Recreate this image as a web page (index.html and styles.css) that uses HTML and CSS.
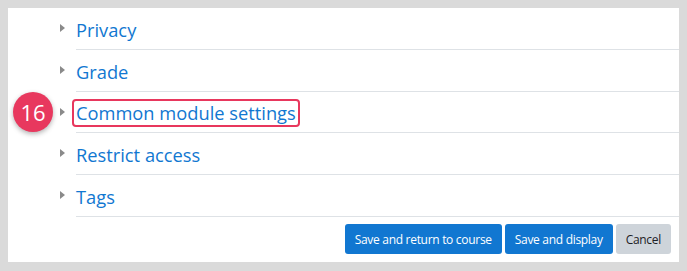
FILE: index.html
```html
<!DOCTYPE html>
<html>
<head>
<meta charset="utf-8">
<link rel="stylesheet" href="styles.css">
</head>
<body>
<div class="panel">
  <ul class="sections">
    <li class="row"><span class="caret"></span><a class="link">Privacy</a></li>
    <li class="row"><span class="caret"></span><a class="link">Grade</a></li>
    <li class="row"><span class="badge">16</span><span class="caret"></span><a class="link highlight">Common module settings</a></li>
    <li class="row"><span class="caret"></span><a class="link">Restrict access</a></li>
    <li class="row"><span class="caret"></span><a class="link">Tags</a></li>
  </ul>
  <div class="actions">
    <button class="btn primary">Save and return to course</button>
    <button class="btn primary">Save and display</button>
    <button class="btn secondary">Cancel</button>
  </div>
</div>
</body>
</html>
```
FILE: styles.css
```css
html, body {
  margin: 0;
  padding: 0;
}
body {
  background: #dadada;
  padding: 8px;
  font-family: "Open Sans", "Noto Sans", sans-serif;
}
.panel {
  background: #fff;
  width: 671px;
  height: 254px;
  box-sizing: border-box;
  display: flex;
  flex-direction: column;
  padding: 0 8px 8px 0;
}
.sections {
  list-style: none;
  margin: 0;
  padding: 0;
}
.row {
  position: relative;
  height: 41.75px;
  box-sizing: border-box;
  margin-left: 68px;
  margin-right: -8px;
  border-bottom: 1px solid #dee2e6;
  display: flex;
  align-items: center;
  padding-top: 3px;
}
.caret {
  position: absolute;
  left: -16px;
  top: 16px;
  width: 0;
  height: 0;
  border-top: 4px solid transparent;
  border-bottom: 4px solid transparent;
  border-left: 5px solid #8a8a8a;
}
.link {
  color: #1177d1;
  font-size: 18.3px;
  line-height: 24px;
  padding: 0 2px;
  margin-left: -4px;
  border: 2px solid transparent;
  border-radius: 4px;
}
.highlight {
  border-color: #e8375d;
}
.badge {
  position: absolute;
  left: -63px;
  top: 0;
  width: 40px;
  height: 40px;
  border-radius: 50%;
  background: #e8385e;
  color: #fff;
  font-size: 22px;
  line-height: 40px;
  text-align: center;
  box-shadow: 0 2px 5px rgba(0,0,0,0.3);
}
.actions {
  margin-top: auto;
  display: flex;
  justify-content: flex-end;
  gap: 3px;
}
.btn {
  font-family: "Open Sans", "Noto Sans", sans-serif;
  font-size: 12px;
  height: 30px;
  border: none;
  border-radius: 3px;
  padding: 0 10px;
  letter-spacing: -0.3px;
}
.primary {
  background: #1177d1;
  color: #fff;
}
.secondary {
  background: #ced4da;
  color: #1d2125;
}
```
